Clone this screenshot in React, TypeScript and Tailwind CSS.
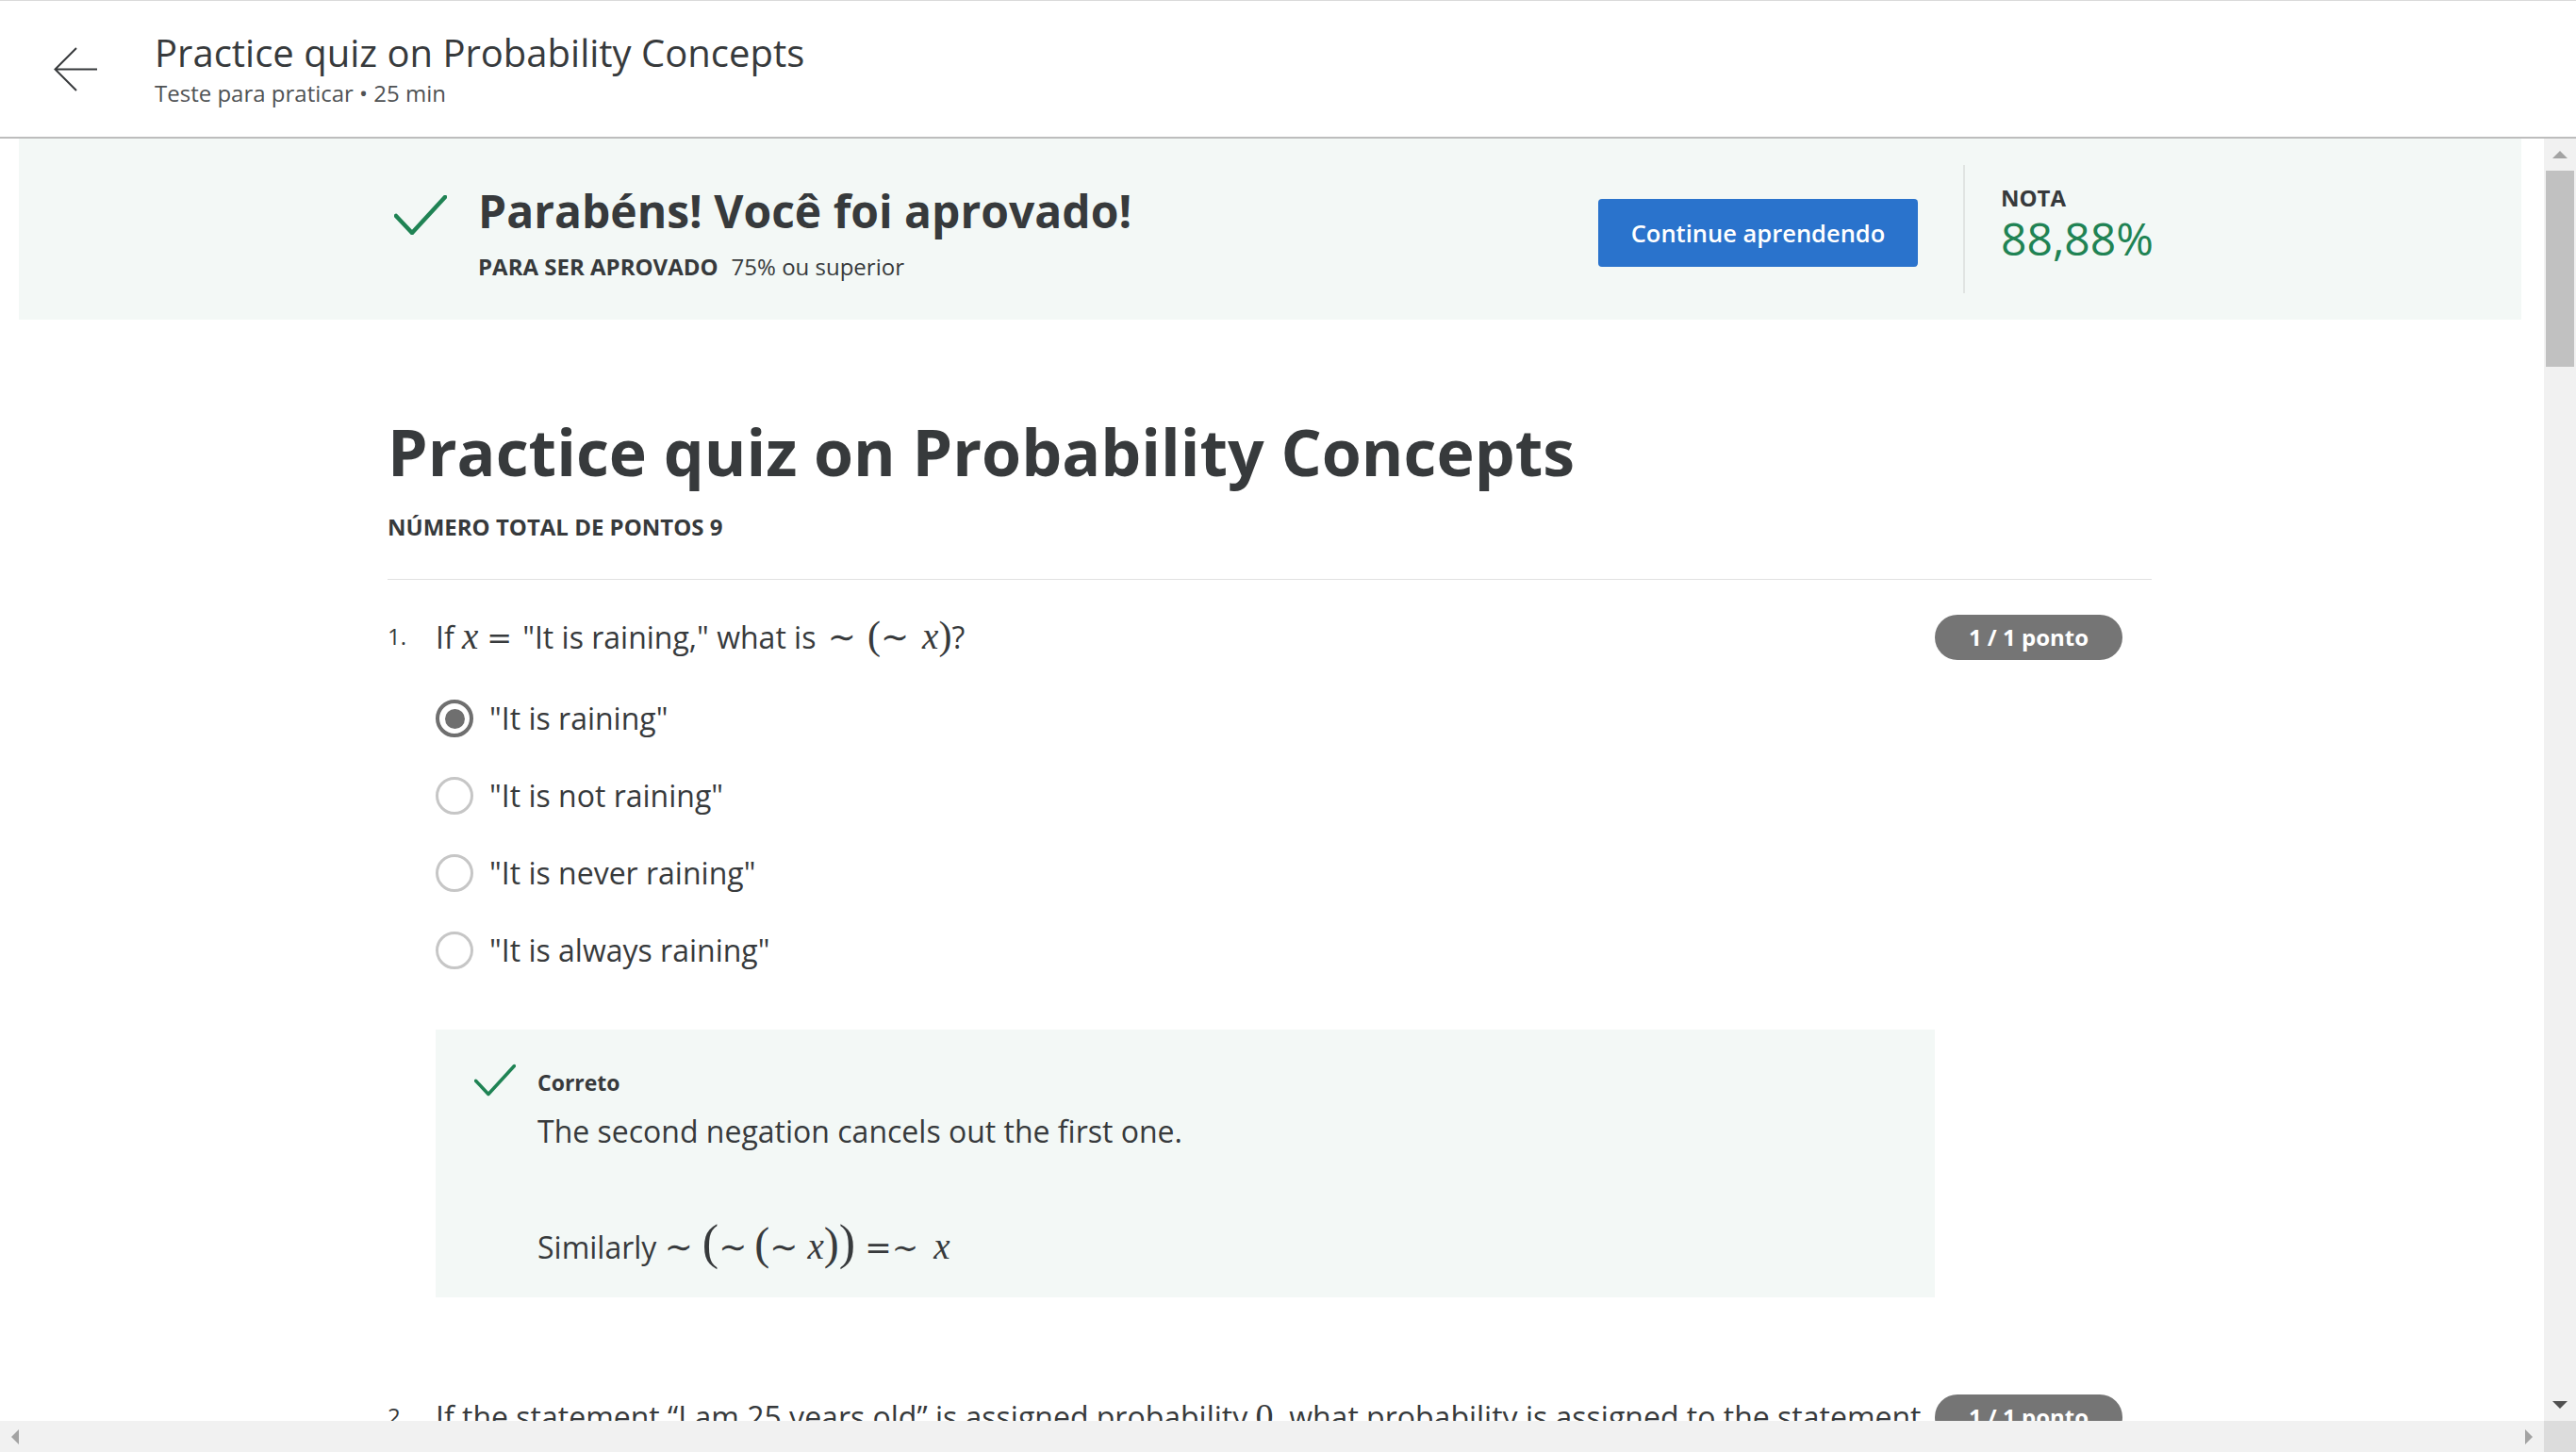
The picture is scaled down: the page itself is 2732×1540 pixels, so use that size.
import React from "react";

const serif = "font-['Liberation_Serif','DejaVu_Serif',serif]";
const op = "font-['DejaVu_Serif',serif]";

function Check({ className }: { className?: string }) {
  return (
    <svg viewBox="0 0 56 42" className={className} fill="none">
      <path d="M2 22 L19 40 L54 2" stroke="#1f8354" strokeWidth="4.5" strokeLinecap="round" strokeLinejoin="round" />
    </svg>
  );
}

function Badge() {
  return (
    <div className="shrink-0 mr-[31px] w-[199px] h-[48px] rounded-full bg-[#757575] text-white text-[24px] font-bold flex items-center justify-center">
      1 / 1 ponto
    </div>
  );
}

function Radio({ checked }: { checked?: boolean }) {
  if (checked) {
    return (
      <span className="w-[40px] h-[40px] shrink-0 rounded-full border-[4px] border-[#6f6f6f] flex items-center justify-center">
        <span className="w-[21px] h-[21px] rounded-full bg-[#6f6f6f]" />
      </span>
    );
  }
  return <span className="w-[40px] h-[40px] shrink-0 rounded-full border-[3px] border-[#c6c6c6]" />;
}

const options = ['"It is raining"', '"It is not raining"', '"It is never raining"', '"It is always raining"'];

export default function App() {
  return (
    <div className="w-[2732px] h-[1540px] flex flex-col overflow-hidden bg-white text-[#373a3c] font-['Open_Sans',sans-serif]">
      <header className="h-[147px] shrink-0 flex items-center border-t border-t-[#dadada] border-b-2 border-b-[#bdbdbd] pl-[57px]">
        <svg width="47" height="47" viewBox="0 0 47 47" fill="none" stroke="#373a3c" strokeWidth="2">
          <path d="M46 23.5 H2 M24 1 L1.5 23.5 L24 46" />
        </svg>
        <div className="ml-[60px] flex flex-col">
          <h1 className="text-[40px] leading-[48px]">Practice quiz on Probability Concepts</h1>
          <p className="mt-[3px] text-[24px] leading-[32px] text-[#4f5254]">Teste para praticar • 25 min</p>
        </div>
      </header>

      <div className="flex-1 flex min-h-0">
        <div className="flex-1 flex flex-col min-w-0">
          <main className="flex-1 overflow-hidden">
            <section className="ml-[20px] mr-[24px] h-[192px] bg-[#f3f8f6] pl-[391px] flex items-center">
              <div className="w-[1871px] flex items-center justify-between">
                <div className="mt-[7px] flex items-start">
                  <Check className="ml-[7px] mt-[12px] w-[56px] h-[42px]" />
                  <div className="ml-[33px]">
                    <h2 className="text-[48px] leading-[58px] font-bold">Parabéns! Você foi aprovado!</h2>
                    <p className="mt-[14px] text-[24px] leading-[32px]">
                      <span className="font-bold mr-[14px]">PARA SER APROVADO</span>75% ou superior
                    </p>
                  </div>
                </div>
                <div className="flex items-center">
                  <button className="mt-[8px] w-[339px] h-[72px] rounded-[4px] bg-[#2a73cc] text-white text-[25.5px] font-semibold">
                    Continue aprendendo
                  </button>
                  <div className="ml-[48px] w-[2px] h-[136px] bg-[#e0e4e2]" />
                  <div className="ml-[38px] w-[160px] pb-[10px]">
                    <div className="text-[24px] leading-[30px] font-bold">NOTA</div>
                    <div className="text-[48px] leading-[56px] text-[#1f8354] whitespace-nowrap">88,88%</div>
                  </div>
                </div>
              </div>
            </section>

            <div className="ml-[411px] w-[1871px]">
              <h1 className="mt-[99px] text-[68px] leading-[82px] font-bold">Practice quiz on Probability Concepts</h1>
              <p className="mt-[24px] text-[24px] leading-[30px] font-bold">NÚMERO TOTAL DE PONTOS 9</p>
              <div className="mt-[40px] h-px bg-[#e1e1e1]" />

              {/* question 1 */}
              <div className="mt-[37px] flex items-start">
                <div className="w-[51px] text-[24px] leading-[46px]">1.</div>
                <div className="flex-1 min-w-0">
                  <div className="h-[48px] text-[32px] leading-[48px] whitespace-nowrap">
                    If <span className={`${serif} italic text-[39px] leading-none`}>x</span>
                    <span className={`${op} text-[32px] leading-none ml-[9px] mr-[11px]`}>=</span>"It is raining," what is{" "}
                    <span className={`${op} text-[36px] leading-none ml-[4px] mr-[12px]`}>∼</span>
                    <span className={`${serif} text-[42px] leading-none`}>(</span>
                    <span className={`${op} text-[36px] leading-none mr-[14px]`}>∼</span>
                    <span className={`${serif} italic text-[39px] leading-none`}>x</span>
                    <span className={`${serif} text-[42px] leading-none`}>)</span>?
                  </div>
                  <div className="mt-[21px]">
                    {options.map((o, i) => (
                      <div key={o} className="h-[82px] flex items-center">
                        <Radio checked={i === 0} />
                        <span className="ml-[17px] text-[32px] leading-[48px]">{o}</span>
                      </div>
                    ))}
                  </div>
                  <div className="mt-[43px] bg-[#f3f8f6] pt-[40px] pb-[36px] pl-[41px] flex items-start">
                    <Check className="-mt-[5px] w-[44px] h-[37px]" />
                    <div className="ml-[23px]">
                      <div className="text-[23px] leading-[32px] font-bold">Correto</div>
                      <p className="mt-[12px] text-[32px] leading-[48px]">The second negation cancels out the first one.</p>
                      <p className="mt-[68px] h-[48px] text-[32px] leading-[48px] whitespace-nowrap">
                        Similarly{" "}
                        <span className={`${op} text-[36px] leading-none mr-[10px]`}>∼</span>
                        <span className={`${serif} text-[52px] leading-none`}>(</span>
                        <span className={`${op} text-[36px] leading-none mr-[8px]`}>∼</span>
                        <span className={`${serif} text-[48px] leading-none`}>(</span>
                        <span className={`${op} text-[36px] leading-none mr-[10px]`}>∼</span>
                        <span className={`${serif} italic text-[39px] leading-none`}>x</span>
                        <span className={`${serif} text-[48px] leading-none`}>)</span>
                        <span className={`${serif} text-[52px] leading-none`}>)</span>
                        <span className={`${op} text-[34px] leading-none ml-[10px] mr-[16px]`}>=∼</span>
                        <span className={`${serif} italic text-[39px] leading-none`}>x</span>
                      </p>
                    </div>
                  </div>
                </div>
                <Badge />
              </div>

              {/* question 2 */}
              <div className="mt-[103px] flex items-start">
                <div className="w-[51px] text-[24px] leading-[46px]">2.</div>
                <div className="flex-1 min-w-0 text-[32px] leading-[48px]">
                  If the statement “I am 25 years old” is assigned probability{" "}
                  <span className={`${serif} text-[38px] leading-none`}>0</span>, what probability is assigned to the statement
                  “I am not 25 years old”?
                </div>
                <Badge />
              </div>
            </div>
          </main>

          {/* horizontal scrollbar */}
          <div className="h-[33px] shrink-0 bg-[#f1f1f1] flex items-center justify-between px-[12px]">
            <svg width="8" height="16" viewBox="0 0 8 16">
              <path d="M8 0 L0 8 L8 16 Z" fill="#a3a3a3" />
            </svg>
            <svg width="8" height="16" viewBox="0 0 8 16">
              <path d="M0 0 L8 8 L0 16 Z" fill="#a3a3a3" />
            </svg>
          </div>
        </div>

        {/* vertical scrollbar */}
        <div className="w-[34px] shrink-0 flex flex-col bg-[#f1f1f1]">
          <div className="h-[34px] flex items-center justify-center">
            <svg width="16" height="8" viewBox="0 0 16 8">
              <path d="M0 8 L8 0 L16 8 Z" fill="#a3a3a3" />
            </svg>
          </div>
          <div className="mx-[2px] h-[208px] bg-[#c1c1c1]" />
          <div className="flex-1" />
          <div className="h-[34px] flex items-center justify-center">
            <svg width="16" height="8" viewBox="0 0 16 8">
              <path d="M0 0 L16 0 L8 8 Z" fill="#505050" />
            </svg>
          </div>
          <div className="h-[33px] bg-[#dcdcdc]" />
        </div>
      </div>
    </div>
  );
}
